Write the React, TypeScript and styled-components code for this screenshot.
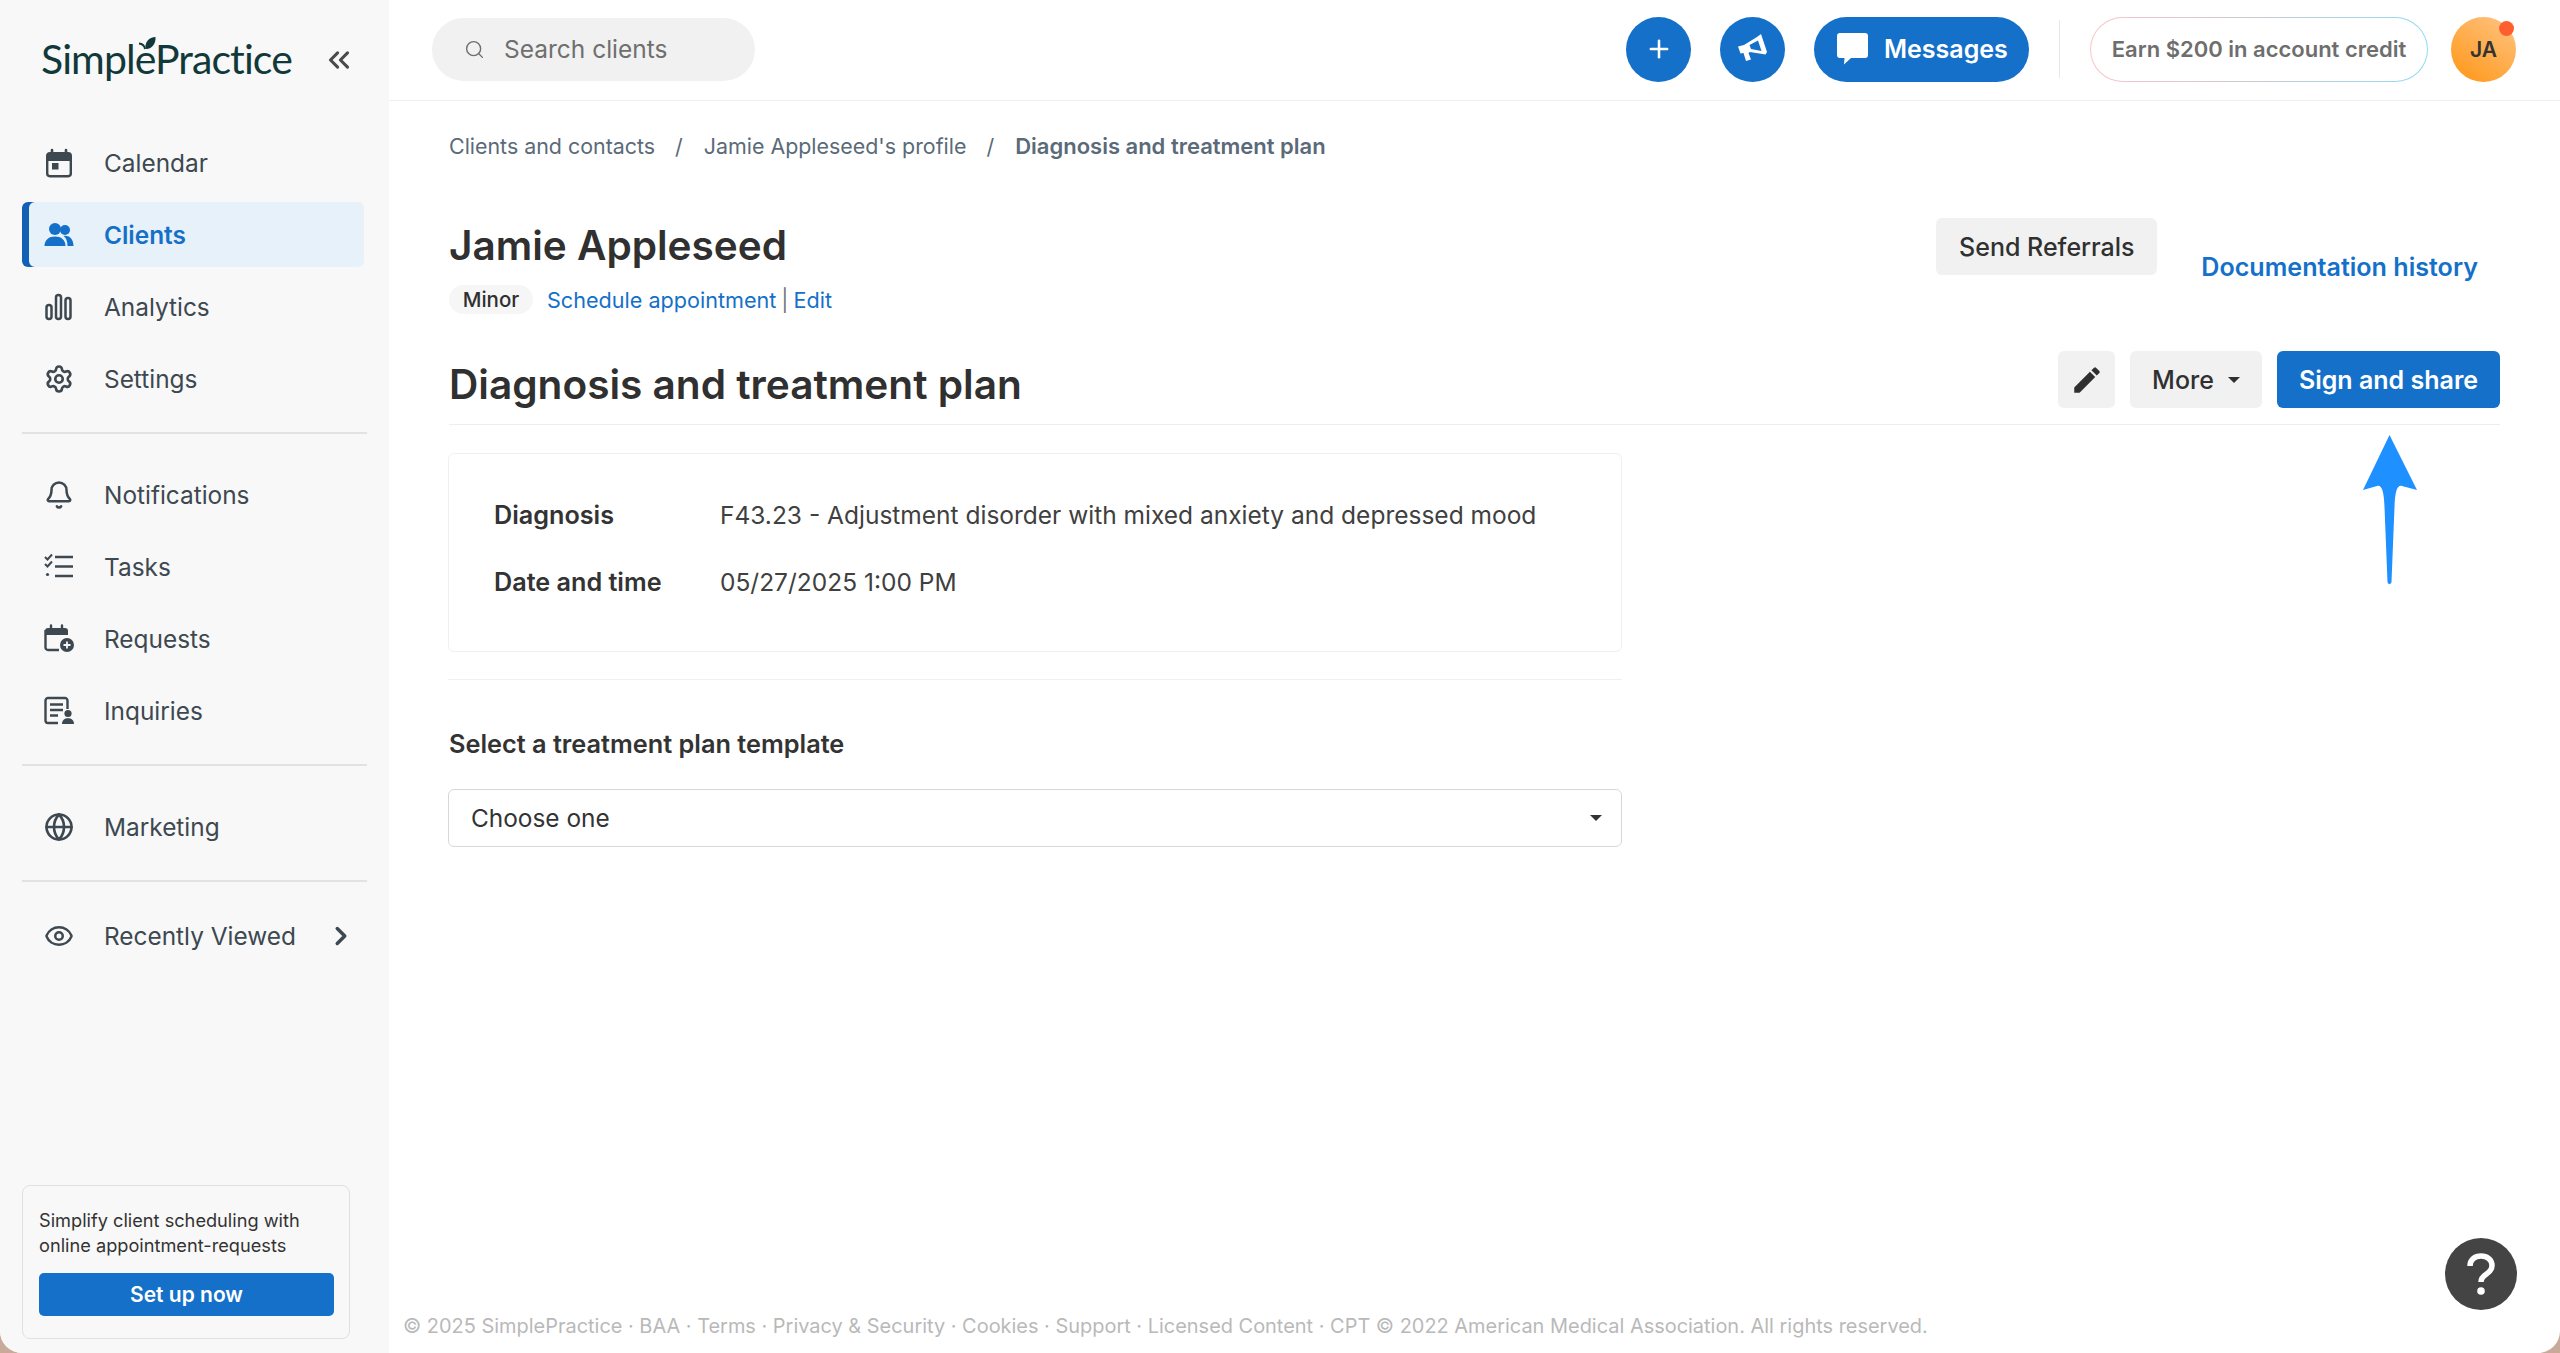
import React from "react";
import styled, { createGlobalStyle } from "styled-components";
import { Bell, ChevronRight, ChevronsLeft, Eye, Globe, Search, Settings, Plus } from "lucide-react";
import { MdEdit } from "react-icons/md";

const Global = createGlobalStyle`
  html, body { margin: 0; padding: 0; background: #c9a998; }
  body { font-family: Inter, "Liberation Sans", sans-serif; color: #303030; }
  #root { width: 2560px; height: 1353px; overflow: hidden; }
  * { box-sizing: border-box; }
`;

const Page = styled.div`
  position: relative;
  display: flex;
  width: 2560px;
  height: 1353px;
  background: #fff;
  border-radius: 0 0 22px 22px;
  overflow: hidden;
`;

const Sidebar = styled.aside`
  width: 389px;
  flex: none;
  display: flex;
  flex-direction: column;
  background: #f8f8f8;
  padding: 0 22px 14px;
`;

const LogoRow = styled.div`
  height: 130px;
  display: flex;
  justify-content: space-between;
  padding: 32px 11px 0 19px;
  align-items: flex-start;
  color: #4a4a4a;
`;

const LogoWrap = styled.div`
  position: relative;
  font-family: Lato, sans-serif;
  font-size: 41px;
  line-height: 54px;
  letter-spacing: -0.9px;
  color: #12393a;
  white-space: nowrap;
`;

const Leaf = styled.svg`
  position: absolute;
  left: 97px;
  top: 4px;
  width: 18px;
  height: 16px;
`;

const NavGroup = styled.nav`
  display: flex;
  flex-direction: column;
  gap: 7px;
`;

const NavRow = styled.div<{ $active?: boolean }>`
  height: 65px;
  display: flex;
  align-items: center;
  width: 342px;
  padding-left: 22px;
  gap: 30px;
  font-size: 24.4px;
  font-weight: ${(p) => (p.$active ? 600 : 400)};
  color: ${(p) => (p.$active ? "#1470c8" : "#3d4850")};
  background: ${(p) => (p.$active ? "#e7f1fa" : "transparent")};
  border-radius: 6px;
  box-shadow: ${(p) => (p.$active ? "inset 7px 0 0 #1261b4" : "none")};
`;

const IconBox = styled.span`
  width: 30px;
  height: 30px;
  flex: none;
  display: flex;
  align-items: center;
  justify-content: center;
  svg { display: block; }
`;

const NavLabel = styled.span`
  flex: 1;
  white-space: nowrap;
`;

const TrailingChevron = styled.span`
  display: flex;
  margin-right: 9px;
`;

const NavDivider = styled.hr<{ $after: number }>`
  width: 345px;
  margin: 21px 0 ${(p) => p.$after}px;
  border: 0;
  border-top: 2px solid #e2e2e2;
`;

const Promo = styled.div`
  margin-top: auto;
  width: 328px;
  height: 154px;
  border: 1px solid #e0e0e0;
  border-radius: 8px;
  padding: 22px 15px 0 16px;
`;

const PromoText = styled.p`
  margin: 0 0 15px;
  font-size: 18.200px;
  line-height: 25px;
  color: #333;
  white-space: nowrap;
`;

const PromoButton = styled.div`
  height: 43px;
  display: flex;
  align-items: center;
  justify-content: center;
  background: #1470c8;
  color: #fff;
  border-radius: 5px;
  font-size: 21px;
  font-weight: 600;
`;

const Main = styled.main`
  flex: 1;
  min-width: 0;
  display: flex;
  flex-direction: column;
`;

const Topbar = styled.header`
  height: 101px;
  flex: none;
  display: flex;
  align-items: center;
  padding: 0 44px 2px 43px;
  border-bottom: 1px solid #f0f0f0;
`;

const SearchBox = styled.div`
  width: 323px;
  height: 63px;
  border-radius: 32px;
  background: #f1f1f1;
  display: flex;
  align-items: center;
  gap: 19px;
  padding-left: 32px;
  font-size: 24.500px;
  color: #6f6f6f;
  margin-right: auto;
`;

const RoundButton = styled.div`
  width: 65px;
  height: 65px;
  border-radius: 50%;
  background: #1470c8;
  color: #fff;
  display: flex;
  align-items: center;
  justify-content: center;
  margin-right: 29px;
`;

const MessagesButton = styled.div`
  width: 215px;
  height: 65px;
  border-radius: 33px;
  background: #1470c8;
  color: #fff;
  display: flex;
  align-items: center;
  gap: 16px;
  padding-left: 23px;
  font-size: 25px;
  font-weight: 600;
`;

const TopSep = styled.div`
  width: 1px;
  height: 58px;
  background: #e8e8e8;
  margin: 0 30px;
`;

const EarnPill = styled.div`
  width: 338px;
  height: 65px;
  border-radius: 33px;
  border: 1.500px solid transparent;
  background: linear-gradient(#fff, #fff) padding-box,
    linear-gradient(90deg, #f9c6cb, #c9c9d0 50%, #8fdcf2) border-box;
  display: flex;
  align-items: center;
  justify-content: center;
  font-size: 22px;
  font-weight: 600;
  color: #6e6e6e;
  margin-right: 23px;
  white-space: nowrap;
`;

const Avatar = styled.div`
  position: relative;
  width: 65px;
  height: 65px;
  border-radius: 50%;
  background: linear-gradient(215deg, #ffc07a 10%, #ff9a1f 90%);
  color: #333;
  display: flex;
  align-items: center;
  justify-content: center;
  font-size: 21px;
  font-weight: 600;
`;

const AvatarDot = styled.span`
  position: absolute;
  top: 4px;
  right: 2px;
  width: 15px;
  height: 15px;
  border-radius: 50%;
  background: #ff5f2e;
`;

const Content = styled.div`
  padding: 30px 60px 0;
`;

const Crumbs = styled.div`
  display: flex;
  line-height: 30px;
  font-size: 21.400px;
  color: #5a6a78;
  white-space: nowrap;
`;

const Slash = styled.span`
  margin: 0 21px 0 20px;
`;

const CrumbCurrent = styled.span`
  font-size: 22px;
  font-weight: 600;
`;

const ProfileRow = styled.section`
  margin-top: 57px;
  display: flex;
  justify-content: space-between;
  align-items: flex-start;
  padding-right: 22px;
`;

const ClientName = styled.h1`
  margin: 3px 0 0;
  font-size: 40.500px;
  line-height: 50px;
  font-weight: 600;
  color: #303030;
`;

const MetaRow = styled.div`
  margin-top: 14px;
  display: flex;
  align-items: center;
  height: 29px;
  font-size: 21.600px;
  color: #777;
`;

const Badge = styled.span`
  height: 29px;
  width: 84px;
  border-radius: 15px;
  background: #f6f6f6;
  display: flex;
  align-items: center;
  justify-content: center;
  font-size: 20.500px;
  font-weight: 500;
  color: #303030;
  margin-right: 14px;
`;

const TextLink = styled.a`
  color: #1470c8;
`;

const Pipe = styled.span`
  margin: 0 5px;
`;

const ProfileActions = styled.div`
  display: flex;
  align-items: flex-start;
  gap: 44px;
`;

const GreyButton = styled.div<{ $w: number }>`
  width: ${(p) => p.$w}px;
  height: 57px;
  display: flex;
  align-items: center;
  justify-content: center;
  gap: 14px;
  border-radius: 6px;
  background: #f1f1f1;
  color: #303030;
  font-size: 25px;
  font-weight: 500;
`;

const HistoryLink = styled.a`
  margin-top: 34px;
  line-height: 30px;
  font-size: 25.100px;
  font-weight: 600;
  color: #1470c8;
`;

const SectionHead = styled.section`
  margin-top: 37px;
  padding-bottom: 14px;
  border-bottom: 1px solid #eeeeee;
  display: flex;
  justify-content: space-between;
  align-items: flex-start;
`;

const SectionTitle = styled.h2`
  margin: 9px 0 0;
  font-size: 40.600px;
  line-height: 50px;
  font-weight: 600;
  color: #303030;
`;

const SectionActions = styled.div`
  display: flex;
  gap: 15px;
`;

const Caret = styled.span`
  width: 0;
  height: 0;
  border-left: 6px solid transparent;
  border-right: 6px solid transparent;
  border-top: 6px solid currentColor;
`;

const PrimaryButton = styled.div`
  width: 223px;
  height: 57px;
  display: flex;
  align-items: center;
  justify-content: center;
  border-radius: 6px;
  background: #1470c8;
  color: #fff;
  font-size: 25px;
  font-weight: 600;
`;

const Card = styled.section`
  margin: 28px 0 0 -1px;
  width: 1174px;
  height: 199px;
  border: 1px solid #f0f0f0;
  border-radius: 6px;
  padding: 46px 45px 0;
  display: grid;
  grid-template-columns: 226px 1fr;
  grid-auto-rows: 30px;
  row-gap: 37px;
  font-size: 24.500px;
  line-height: 30px;
  color: #404040;
`;

const CardLabel = styled.div`
  font-size: 25.200px;
  font-weight: 600;
  color: #333;
`;

const ContentDivider = styled.hr`
  width: 1174px;
  margin: 27px 0 49px -1px;
  border: 0;
  border-top: 1px solid #f0f0f0;
`;

const FieldLabel = styled.label`
  display: block;
  line-height: 30px;
  font-size: 25.300px;
  font-weight: 600;
  color: #333;
`;

const SelectBox = styled.div`
  margin: 30px 0 0 -1px;
  width: 1174px;
  height: 58px;
  border: 1px solid #d8d8d8;
  border-radius: 6px;
  display: flex;
  align-items: center;
  justify-content: space-between;
  padding: 0 19px 0 22px;
  font-size: 24.400px;
  color: #333;
`;

const Footer = styled.footer`
  margin-top: auto;
  padding: 0 0 14px 14px;
  font-size: 19.950px;
  line-height: 26px;
  color: #b9b9b9;
  white-space: nowrap;
`;

const HelpButton = styled.div`
  position: absolute;
  left: 2445px;
  top: 1238px;
  width: 72px;
  height: 72px;
  border-radius: 50%;
  background: #444;
  color: #fff;
  display: flex;
  align-items: center;
  justify-content: center;
`;

const Annotation = styled.svg`
  position: absolute;
  left: 2360px;
  top: 432px;
  width: 60px;
  height: 154px;
`;

const navStroke = "#3d4850";

const CalendarIcon = () => (
  <svg width="30" height="30" viewBox="0 0 30 30" fill="none">
    <path d="M8 2v4M22 2v4" stroke={navStroke} strokeWidth="2.6" strokeLinecap="round" />
    <path d="M3 8a3 3 0 0 1 3-3h18a3 3 0 0 1 3 3v5H3z" fill={navStroke} />
    <rect x="3.2" y="5.2" width="23.6" height="23" rx="2.6" stroke={navStroke} strokeWidth="2.4" />
    <rect x="8" y="15" width="6.5" height="6.5" fill={navStroke} />
  </svg>
);

const ClientsIcon = () => (
  <svg width="30" height="30" viewBox="0 0 30 30" fill="#1470c8">
    <circle cx="11" cy="9" r="6" />
    <circle cx="21" cy="10" r="5" />
    <path d="M0.5 26c0-6.2 4.6-9.5 10.5-9.5S21.500 19.800 21.500 26z" />
    <path d="M19.500 15.800c5.300-.6 10 2.400 10 10.200h-6c0-4.500-1.200-7.800-4-10.200z" />
  </svg>
);

const AnalyticsIcon = () => (
  <svg width="30" height="30" viewBox="0 0 30 30" fill="none" stroke={navStroke} strokeWidth="2.5">
    <rect x="2.500" y="13" width="5" height="14" rx="2.500" />
    <rect x="12" y="3" width="5" height="24" rx="2.500" />
    <rect x="21.500" y="6" width="5" height="21" rx="2.500" />
  </svg>
);

const TasksIcon = () => (
  <svg width="30" height="30" viewBox="0 0 30 30" fill="none" stroke={navStroke} strokeWidth="2.400">
    <path d="M1 5l2.500 2.500L8 2.500M1 12l2.500 2.500L8 9.500" strokeWidth="2" />
    <path d="M11 5h18M11 14.500h18M11 24h18" />
    <circle cx="3.500" cy="22.500" r="1.600" fill={navStroke} stroke="none" />
  </svg>
);

const RequestsIcon = () => (
  <svg width="30" height="30" viewBox="0 0 30 30" fill="none">
    <path d="M7 1.500v4M18 1.500v4" stroke={navStroke} strokeWidth="2.400" strokeLinecap="round" />
    <path d="M1 7a3 3 0 0 1 3-3h17a3 3 0 0 1 3 3v4H1z" fill={navStroke} />
    <path d="M15 26H4a2.500 2.500 0 0 1-2.500-2.500V6" stroke={navStroke} strokeWidth="2.400" />
    <circle cx="23" cy="21" r="7" fill={navStroke} />
    <path d="M23 17.500v7M19.500 21h7" stroke="#f8f8f8" strokeWidth="1.800" />
  </svg>
);

const InquiriesIcon = () => (
  <svg width="30" height="30" viewBox="0 0 30 30" fill="none">
    <path d="M14 27H4a2.500 2.500 0 0 1-2.500-2.500v-20A2.500 2.500 0 0 1 4 2h17a2.500 2.500 0 0 1 2.500 2.500V13" stroke={navStroke} strokeWidth="2.400" />
    <path d="M6 8.500h13M6 14h13M6 19.500h8" stroke={navStroke} strokeWidth="2.400" />
    <circle cx="24" cy="17.500" r="3.600" fill={navStroke} />
    <path d="M18 28c0-4 2.600-5.800 6-5.800s6 1.800 6 5.800z" fill={navStroke} />
  </svg>
);

const MegaphoneIcon = () => (
  <svg width="32" height="32" viewBox="0 0 32 32" fill="#fff">
    <path d="M1 13.500l6-1.500 13-8 4-3 6 18-1.500 2.500-15.500-2.500-1.500 1 2.500 6.500-5 1.500-2.500-8-3 .5z" />
    <path d="M21 7.500l3.500 10.500-10.500-2-1.500-4z" fill="#1470c8" />
  </svg>
);

const BubbleIcon = () => (
  <svg width="31" height="32" viewBox="0 0 31 32" fill="#fff">
    <path d="M3 0h25a3 3 0 0 1 3 3v19a3 3 0 0 1-3 3H14l-7 6.500 .5-6.500H3a3 3 0 0 1-3-3V3a3 3 0 0 1 3-3z" />
  </svg>
);

const QuestionMark = () => (
  <svg width="30" height="44" viewBox="0 0 30 44" fill="none">
    <path d="M4 14c0-6.500 4.800-10 11-10s11 3.800 11 9.500c0 4.300-2.400 6.400-5.500 8.500-3.200 2.100-5.500 3.800-5.500 8" stroke="#fff" strokeWidth="5.500" />
    <circle cx="15" cy="39" r="3.800" fill="#fff" />
  </svg>
);

const primaryNav: [React.ReactNode, string, boolean?][] = [
  [<CalendarIcon />, "Calendar"],
  [<ClientsIcon />, "Clients", true],
  [<AnalyticsIcon />, "Analytics"],
  [<Settings size={30} strokeWidth={2.1} color={navStroke} />, "Settings"],
];

const secondaryNav: [React.ReactNode, string][] = [
  [<Bell size={30} strokeWidth={2} color={navStroke} />, "Notifications"],
  [<TasksIcon />, "Tasks"],
  [<RequestsIcon />, "Requests"],
  [<InquiriesIcon />, "Inquiries"],
];

const Row = ({ icon, label, active }: { icon: React.ReactNode; label: string; active?: boolean }) => (
  <NavRow $active={active}>
    <IconBox>{icon}</IconBox>
    <NavLabel>{label}</NavLabel>
  </NavRow>
);

export default function App() {
  return (
    <Page>
      <Global />
      <Sidebar>
        <LogoRow>
          <LogoWrap>
            SimplePractice
            <Leaf viewBox="0 0 18 16">
              <path d="M7.500 13C6.500 6.500 11 1 17.500 1 18 7.500 14 13.500 7.500 13z" fill="#12393a" />
              <path d="M1 7.500c3 .3 5.500 2.300 6 5.500" stroke="#12393a" strokeWidth="1.800" fill="none" />
            </Leaf>
          </LogoWrap>
          <ChevronsLeft size={34} strokeWidth={2.2} style={{ marginTop: 11 }} />
        </LogoRow>
        <NavGroup>
          {primaryNav.map(([icon, label, active]) => (
            <Row key={label} icon={icon} label={label} active={active} />
          ))}
        </NavGroup>
        <NavDivider $after={28} />
        <NavGroup>
          {secondaryNav.map(([icon, label]) => (
            <Row key={label} icon={icon} label={label} />
          ))}
        </NavGroup>
        <NavDivider $after={28} />
        <NavGroup>
          <Row icon={<Globe size={30} strokeWidth={2.1} color={navStroke} />} label="Marketing" />
        </NavGroup>
        <NavDivider $after={21} />
        <NavGroup>
          <NavRow>
            <IconBox>
              <Eye size={30} strokeWidth={2} color={navStroke} />
            </IconBox>
            <NavLabel>Recently Viewed</NavLabel>
            <TrailingChevron>
              <ChevronRight size={30} strokeWidth={2.8} color={navStroke} />
            </TrailingChevron>
          </NavRow>
        </NavGroup>
        <Promo>
          <PromoText>
            Simplify client scheduling with
            <br />
            online appointment-requests
          </PromoText>
          <PromoButton>Set up now</PromoButton>
        </Promo>
      </Sidebar>
      <Main>
        <Topbar>
          <SearchBox>
            <Search size={21} strokeWidth={1.6} />
            Search clients
          </SearchBox>
          <RoundButton>
            <Plus size={28} strokeWidth={2.2} />
          </RoundButton>
          <RoundButton>
            <MegaphoneIcon />
          </RoundButton>
          <MessagesButton>
            <BubbleIcon />
            Messages
          </MessagesButton>
          <TopSep />
          <EarnPill>Earn $200 in account credit</EarnPill>
          <Avatar>
            JA
            <AvatarDot />
          </Avatar>
        </Topbar>
        <Content>
          <Crumbs>
            <span>Clients and contacts</span>
            <Slash>/</Slash>
            <span>Jamie Appleseed's profile</span>
            <Slash>/</Slash>
            <CrumbCurrent>Diagnosis and treatment plan</CrumbCurrent>
          </Crumbs>
          <ProfileRow>
            <div>
              <ClientName>Jamie Appleseed</ClientName>
              <MetaRow>
                <Badge>Minor</Badge>
                <TextLink>Schedule appointment</TextLink>
                <Pipe>|</Pipe>
                <TextLink>Edit</TextLink>
              </MetaRow>
            </div>
            <ProfileActions>
              <GreyButton $w={221}>Send Referrals</GreyButton>
              <HistoryLink>Documentation history</HistoryLink>
            </ProfileActions>
          </ProfileRow>
          <SectionHead>
            <SectionTitle>Diagnosis and treatment plan</SectionTitle>
            <SectionActions>
              <GreyButton $w={57}>
                <MdEdit size={34} />
              </GreyButton>
              <GreyButton $w={132}>
                More
                <Caret />
              </GreyButton>
              <PrimaryButton>Sign and share</PrimaryButton>
            </SectionActions>
          </SectionHead>
          <Card>
            <CardLabel>Diagnosis</CardLabel>
            <div>F43.23 - Adjustment disorder with mixed anxiety and depressed mood</div>
            <CardLabel>Date and time</CardLabel>
            <div>05/27/2025 1:00 PM</div>
          </Card>
          <ContentDivider />
          <FieldLabel>Select a treatment plan template</FieldLabel>
          <SelectBox>
            Choose one
            <Caret />
          </SelectBox>
        </Content>
        <Footer>
          © 2025 SimplePractice · BAA · Terms · Privacy &amp; Security · Cookies · Support · Licensed Content · CPT © 2022 American Medical Association. All rights reserved.
        </Footer>
      </Main>
      <Annotation viewBox="0 0 60 154">
        <path d="M29.500 3L57 58 42 54C37 52.500 35 60 34.500 75L31.500 150a2 2 0 0 1-4 0L24.500 75C24 60 22 52.500 17 54L3 58z" fill="#1e90ff" />
      </Annotation>
      <HelpButton>
        <QuestionMark />
      </HelpButton>
    </Page>
  );
}
